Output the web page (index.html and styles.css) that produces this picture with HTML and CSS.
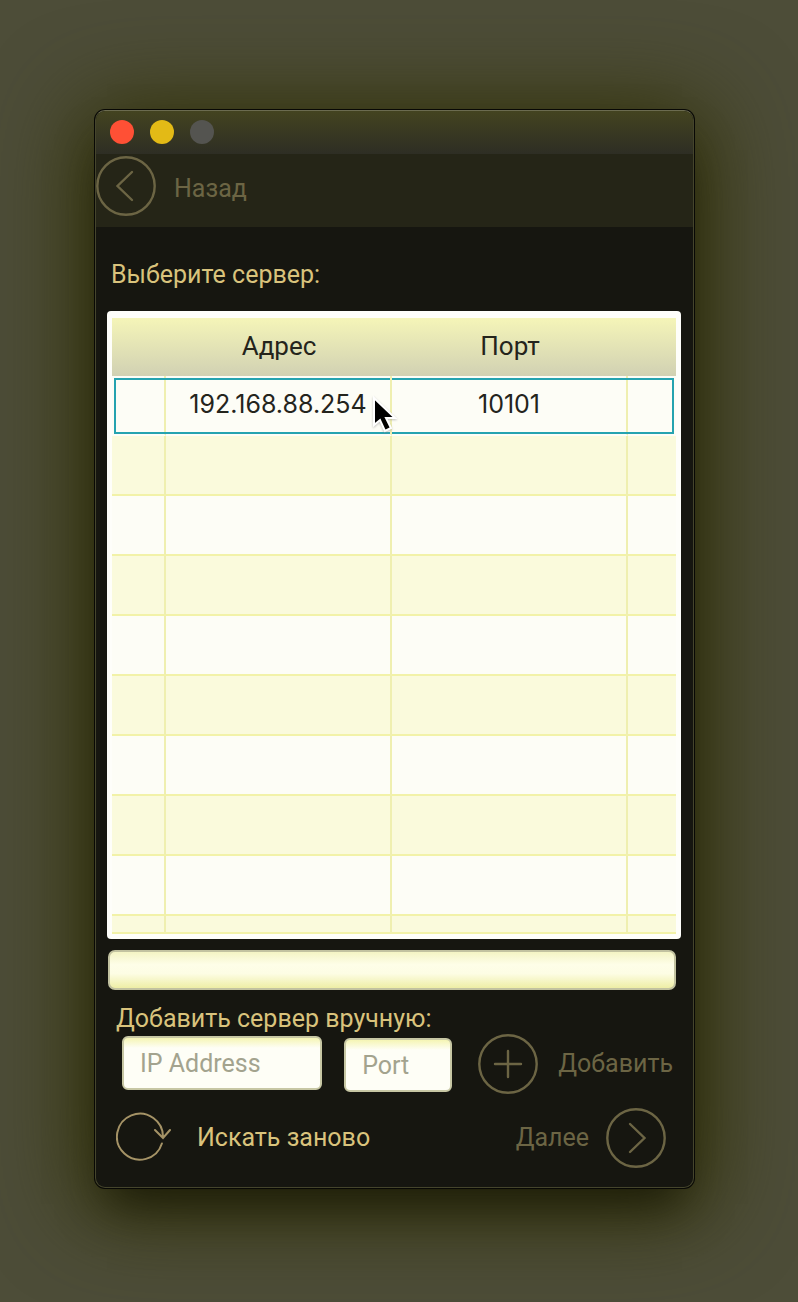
FILE: index.html
```html
<!DOCTYPE html>
<html lang="ru">
<head>
<meta charset="utf-8">
<meta name="viewport" content="width=device-width, initial-scale=1">
<title>Выбор сервера</title>
<link rel="stylesheet" href="styles.css">
</head>
<body>
<main class="window">
  <header class="titlebar">
    <button class="dot dot-close" type="button" aria-label="Закрыть"></button>
    <button class="dot dot-minimize" type="button" aria-label="Свернуть"></button>
    <button class="dot dot-zoom" type="button" aria-label="Развернуть" disabled></button>
  </header>
  <nav class="toolbar">
    <button class="action action-back" type="button" disabled>
      <svg class="icon" viewBox="0 0 60 60"><circle cx="30" cy="30" r="28.7"/><path d="M36 16 21.5 30 36 44"/></svg>
      <span>Назад</span>
    </button>
  </nav>
  <section class="content">
    <h1 class="heading">Выберите сервер:</h1>
    <div class="list">
      <table class="servers">
        <colgroup><col class="col-start"><col class="col-address"><col class="col-port"><col class="col-end"></colgroup>
        <thead><tr><th></th><th scope="col">Адрес</th><th scope="col">Порт</th><th></th></tr></thead>
        <tbody>
          <tr class="selected"><td></td><td class="address">192.168.88.254
            <svg class="pointer" viewBox="0 0 26 38"><path d="M2 2v27l6-5 5 11 6-3-5-10h9z"/></svg></td><td>10101</td><td></td></tr>
          <tr><td></td><td></td><td></td><td></td></tr>
          <tr><td></td><td></td><td></td><td></td></tr>
          <tr><td></td><td></td><td></td><td></td></tr>
          <tr><td></td><td></td><td></td><td></td></tr>
          <tr><td></td><td></td><td></td><td></td></tr>
          <tr><td></td><td></td><td></td><td></td></tr>
          <tr><td></td><td></td><td></td><td></td></tr>
          <tr><td></td><td></td><td></td><td></td></tr>
          <tr class="partial"><td></td><td></td><td></td><td></td></tr>
        </tbody>
      </table>
    </div>
    <progress class="progress" value="0" max="100" aria-label="Поиск серверов"></progress>
    <h2 class="subheading">Добавить сервер вручную:</h2>
    <form class="manual">
      <input class="field field-ip" type="text" placeholder="IP Address" aria-label="IP Address">
      <input class="field field-port" type="text" placeholder="Port" aria-label="Port">
      <button class="action action-add" type="button" disabled>
        <svg class="icon" viewBox="0 0 60 60"><circle cx="30" cy="30" r="28.7"/><path d="M30 17v26M17 30h26"/></svg>
        <span>Добавить</span>
      </button>
    </form>
    <footer class="footer">
      <button class="action action-search" type="button">
        <svg class="icon-refresh" viewBox="0 0 56 52"><path d="M45.9 31.5A23 23 0 1 1 46.9 26M39 18l8 8 7-8"/></svg>
        <span>Искать заново</span>
      </button>
      <button class="action action-next" type="button" disabled>
        <span>Далее</span>
        <svg class="icon" viewBox="0 0 60 60"><circle cx="30" cy="30" r="28.7"/><path d="M24 16 38.5 30 24 44"/></svg>
      </button>
    </footer>
  </section>
</main>
</body>
</html>
```

FILE: styles.css
```css
* { box-sizing: border-box; }

body {
  margin: 0;
  min-height: 100vh;
  padding: 110px 104px 114px 95px;
  background: #4d4d38;
  color: #d9c37c;
  font: 25px/32px Roboto, "Noto Sans", sans-serif;
}

button, input { font: inherit; color: inherit; }

.window {
  overflow: hidden;
  border: 1px solid #45452c;
  border-top-color: #6b6b50;
  border-radius: 10px;
  background: #161610;
  box-shadow: 0 0 0 1px #080805, 0 28px 44px -12px rgba(24, 24, 8, 0.85), 0 10px 90px 14px rgba(48, 48, 0, 0.9);
}

.titlebar {
  display: flex;
  align-items: center;
  gap: 16px;
  height: 43px;
  padding: 0 14px 2px;
  background: linear-gradient(#434320, #2e2e24);
}

.dot {
  width: 24px;
  height: 24px;
  padding: 0;
  border: 0;
  border-radius: 50%;
}
.dot-close { background: #ff5035; }
.dot-minimize { background: #e3ba16; }
.dot-zoom { background: #545450; }

.toolbar {
  height: 73px;
  padding-top: 2px;
  background: #252517;
}

.action {
  display: flex;
  align-items: center;
  gap: 18px;
  padding: 0;
  border: 0;
  background: none;
  white-space: nowrap;
}
.action:disabled { color: #6c6544; }
.action-back span { padding-top: 6px; }

.icon, .icon-refresh {
  flex: none;
  fill: none;
  stroke: currentColor;
  stroke-width: 2.4;
  stroke-linecap: round;
}
.icon { width: 60px; height: 60px; }
.icon-refresh {
  width: 56px;
  height: 52px;
  color: #a59366;
  stroke-width: 2;
}

.content { padding: 32px 12px 19px 11px; }

.heading, .subheading {
  margin: 0;
  font-size: 25px;
  font-weight: 400;
}
.heading { padding: 0 4px; }
.subheading { padding: 0 9px; }

.list {
  margin-top: 20px;
  padding: 7px 5px 5px;
  border-radius: 4px;
  background: #fefefa;
}

.servers {
  width: 100%;
  border-collapse: separate;
  border-spacing: 0;
  table-layout: fixed;
  color: #24241c;
}
.col-start { width: 54px; }
.col-address { width: 226px; }
.col-end { width: 48px; }

.servers thead { background: linear-gradient(#f5f5b8, #d1d1b3); }
.servers th {
  height: 58px;
  padding: 0 0 2px;
  font-size: 26px;
  font-weight: 400;
}
.servers td {
  height: 60px;
  padding: 0;
  border-right: 2px solid #efefb0;
  border-bottom: 2px solid #f2f2a8;
  font-family: Inter, "Noto Sans", sans-serif;
  text-align: center;
}
.servers td:last-child { border-right: 0; }
.servers tbody tr { background: #fdfdf6; }
.servers tbody tr:nth-child(even) { background: #fafadc; }
.servers .selected {
  outline: 2px solid #25a3b0;
  outline-offset: -4px;
}
.servers .selected td {
  padding-bottom: 2px;
  border-bottom-color: #fdfdf6;
}
.servers .partial td { height: 18px; }

.address { position: relative; }
.pointer {
  position: absolute;
  top: 20px;
  right: -8px;
  width: 26px;
  height: 38px;
  fill: #000;
  stroke: #fff;
  stroke-width: 2;
  filter: drop-shadow(0 1px 1px #8888);
}

.progress {
  appearance: none;
  display: block;
  width: calc(100% - 6px);
  height: 40px;
  margin: 11px 1px 13px;
  overflow: hidden;
  border: 2px solid #c2c2a0;
  border-radius: 7px;
  background: linear-gradient(#f4f4c4, #fefee8 35%, #fdfde4 60%, #eeeea6);
}
.progress::-webkit-progress-bar { background: transparent; }

.manual {
  display: flex;
  align-items: center;
  margin-top: -1px;
  padding: 0 8px 0 15px;
}
.field {
  min-width: 0;
  height: 54px;
  padding: 0 16px;
  border: 2px solid #c7c7a4;
  border-radius: 6px;
  background: linear-gradient(#f5f5b4, #fefef6 10px);
}
.field::placeholder { color: #a3a38e; opacity: 1; }
.field-ip { flex: 2 1 200px; margin: 0 22px 2px 0; }
.field-port { flex: 1 1 108px; margin: 2px 26px 0 0; }
.action-add { gap: 20px; }

.footer {
  display: flex;
  align-items: center;
  justify-content: space-between;
  padding: 14px 15px 0 9px;
}
.action-search { gap: 25px; }
.action-next { gap: 17px; }
```
